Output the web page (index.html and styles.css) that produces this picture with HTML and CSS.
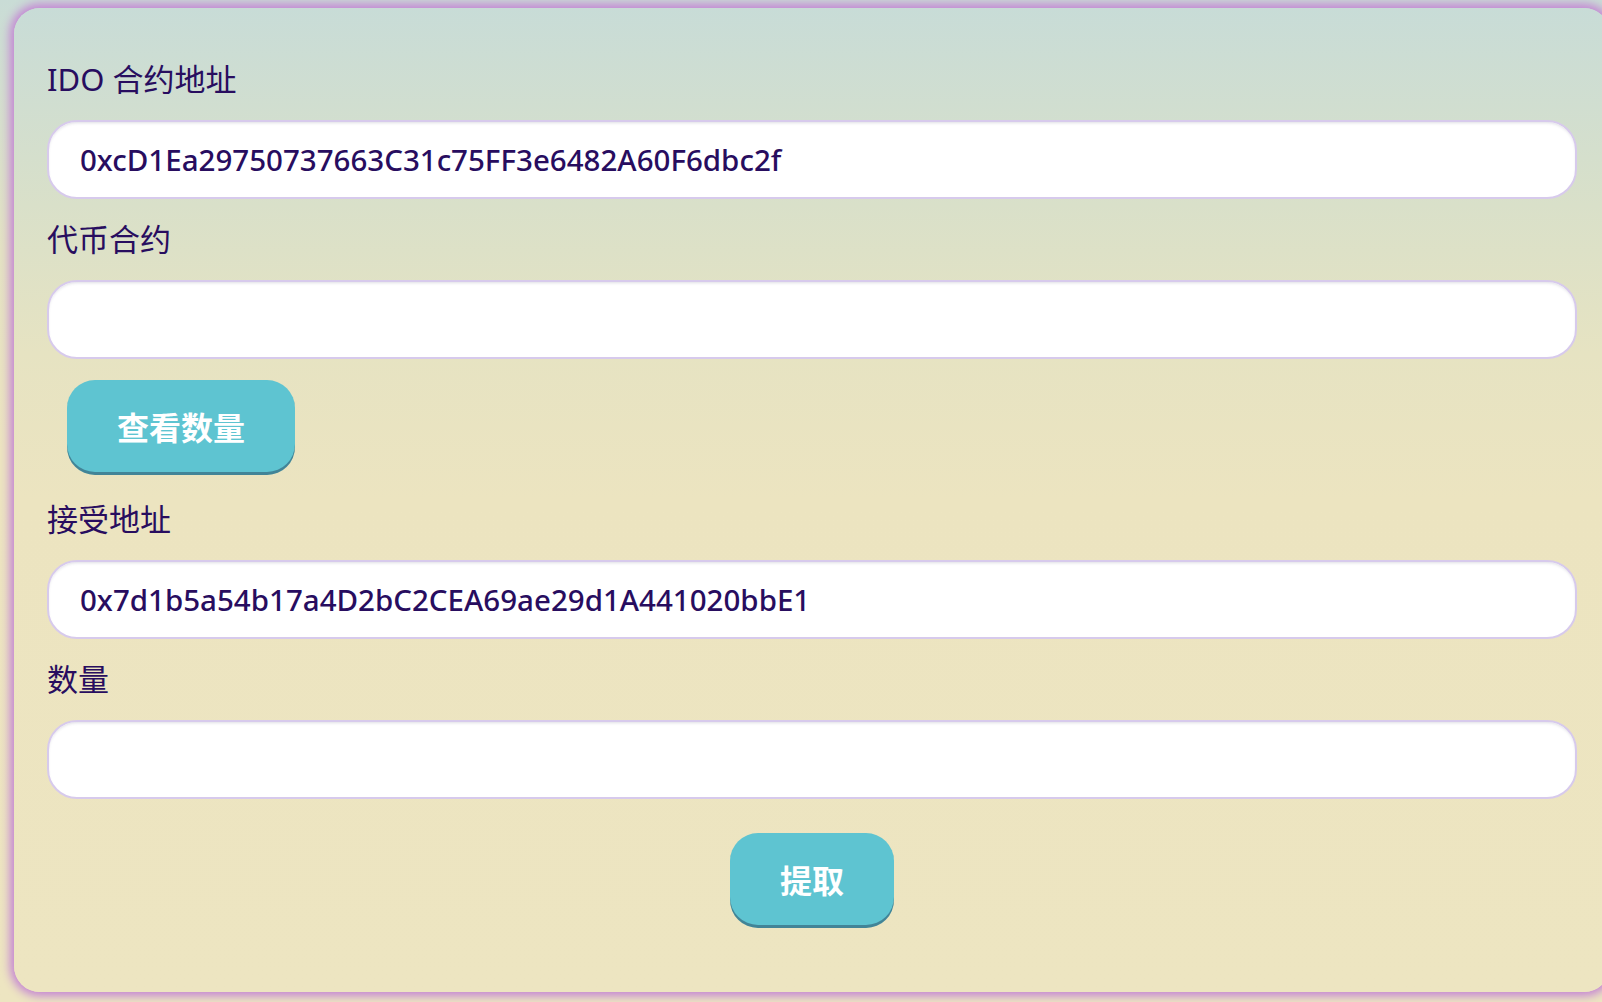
FILE: index.html
```html
<!DOCTYPE html>
<html lang="zh">
<head>
<meta charset="utf-8">
<title>IDO</title>
<link rel="stylesheet" href="styles.css">
</head>
<body>
<div class="card">
  <label class="label">IDO 合约地址</label>
  <div class="input">0xcD1Ea29750737663C31c75FF3e6482A60F6dbc2f</div>
  <label class="label">代币合约</label>
  <div class="input"></div>
  <div class="btn-row"><button class="btn">查看数量</button></div>
  <label class="label">接受地址</label>
  <div class="input">0x7d1b5a54b17a4D2bC2CEA69ae29d1A441020bbE1</div>
  <label class="label">数量</label>
  <div class="input"></div>
  <div class="btn-row center"><button class="btn">提取</button></div>
</div>
</body>
</html>
```
FILE: styles.css
```css
html, body {
  margin: 0;
  padding: 0;
}
body {
  width: 1602px;
  height: 1002px;
  overflow: hidden;
  background: linear-gradient(180deg, #c9dcd6 0%, #e3e2c3 25%, #ece4c0 45%, #ede5c1 100%);
  font-family: "Noto Sans", "Noto Sans CJK SC", sans-serif;
  color: #280d5f;
}
.card {
  box-sizing: border-box;
  margin: 8px 0 0 14px;
  width: 1596px;
  height: 984px;
  padding: 31px 33px 0 33px;
  border-radius: 26px;
  background: linear-gradient(180deg, #c8dcd7 0%, #d9e0c9 20%, #e6e3c2 35%, #ece4c0 50%, #ede5c1 100%);
  box-shadow: 0 0 10px 4px rgba(196, 132, 212, 1);
}
.label {
  display: block;
  height: 81px;
  line-height: 81px;
  font-size: 31px;
  color: #280d5f;
}
.input {
  box-sizing: border-box;
  height: 79px;
  border: 2px solid #d7caec;
  border-radius: 30px;
  background: #ffffff;
  box-shadow: inset 0 2px 3px -1px rgba(74, 74, 104, 0.18);
  padding: 0 31px;
  display: flex;
  align-items: center;
  font-size: 29.5px;
  font-weight: 500;
  color: #280d5f;
}
.btn-row {
  display: flex;
  padding: 21px 0 4px 20px;
}
.btn-row.center {
  justify-content: center;
  padding: 34px 0 0 0;
}
.btn {
  height: 95px;
  padding: 0 50px 3px;
  border: none;
  border-radius: 28px;
  background: #5ec4d1;
  box-shadow: inset 0 -3px 0 rgba(14, 14, 44, 0.35);
  color: #ffffff;
  font-family: "Noto Sans CJK SC", sans-serif;
  font-weight: 700;
  font-size: 32px;
  cursor: pointer;
}
```
